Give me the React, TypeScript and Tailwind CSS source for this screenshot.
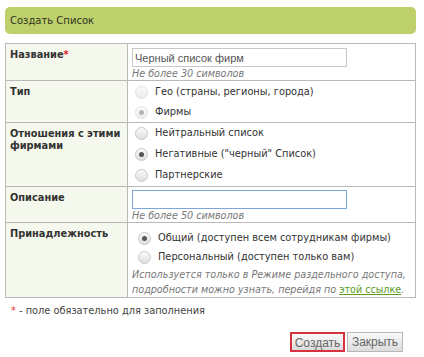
import React from "react";

const Radio = ({ checked, disabled }: { checked?: boolean; disabled?: boolean }) => (
  <span
    className={`inline-flex items-center justify-center w-[13px] h-[13px] rounded-full border shrink-0 ${
      disabled
        ? "border-[#e2e2e2] bg-gradient-to-b from-[#fbfbfb] to-[#ececec]"
        : "border-[#c9c9c9] bg-gradient-to-b from-[#fafafa] to-[#dedede]"
    }`}
  >
    {checked && (
      <span className={`w-[5px] h-[5px] rounded-full ${disabled ? "bg-[#b5b5b5]" : "bg-[#555]"}`}></span>
    )}
  </span>
);

const Option = ({
  label,
  checked,
  disabled,
  className = "",
}: {
  label: string;
  checked?: boolean;
  disabled?: boolean;
  className?: string;
}) => (
  <label className={`flex items-center gap-[7px] ${className}`}>
    <Radio checked={checked} disabled={disabled} />
    <span>{label}</span>
  </label>
);

const Label = ({ children }: { children: React.ReactNode }) => (
  <td className="w-[122px] align-top bg-[#f5f8ec] border border-[#b9b9b9] px-[4px] pt-[5px] font-bold text-[#333] leading-[12px]">
    {children}
  </td>
);

const Hint = ({ children, className = "" }: { children: React.ReactNode; className?: string }) => (
  <div className={`italic text-[#777] text-[9.6px] ${className}`}>{children}</div>
);

export default function App() {
  return (
    <div
      className="w-[424px] h-[357px] bg-white text-[9.8px] text-[#333] pt-[7px] px-[5px]"
      style={{ fontFamily: '"DejaVu Sans", Verdana, sans-serif' }}
    >
      <div className="h-[27px] w-[411px] rounded-[5px] bg-[#bdd06c] flex items-center pl-[5px] text-[10px] text-[#2f3320]">
        Создать Список
      </div>

      <table className="mt-[9px] w-[411px] border-collapse">
        <tbody>
          <tr>
            <Label>
              Название<span className="text-[#d22]">*</span>
            </Label>
            <td className="h-[37px] align-top border border-[#b9b9b9] pl-[4px] pt-[4px]">
              <input
                defaultValue="Черный список фирм"
                className="block w-[215px] h-[19px] border border-[#c8c8c8] px-[2px] text-[11px] text-[#555] outline-none"
                style={{ fontFamily: '"Liberation Sans", Arial, sans-serif' }}
              />
              <Hint className="leading-[13px]">Не более 30 символов</Hint>
            </td>
          </tr>
          <tr>
            <Label>Тип</Label>
            <td className="h-[42px] align-top border border-[#b9b9b9] pl-[7px] pt-[1px]">
              <Option label="Гео (страны, регионы, города)" disabled className="h-[20px]" />
              <Option label="Фирмы" checked disabled className="h-[20px]" />
            </td>
          </tr>
          <tr>
            <Label>Отношения с этими фирмами</Label>
            <td className="h-[64px] align-top border border-[#b9b9b9] pl-[7px]">
              <Option label="Нейтральный список" className="h-[21px]" />
              <Option label='Негативные ("черный" Список)' checked className="h-[21px]" />
              <Option label="Партнерские" className="h-[21px]" />
            </td>
          </tr>
          <tr>
            <Label>Описание</Label>
            <td className="h-[36px] align-top border border-[#b9b9b9] pl-[4px] pt-[3px]">
              <input
                className="block w-[215px] h-[19px] border border-[#7ea7d8] px-[2px] text-[11px] outline-none"
                style={{ fontFamily: '"Liberation Sans", Arial, sans-serif' }}
              />
              <Hint className="leading-[13px]">Не более 50 символов</Hint>
            </td>
          </tr>
          <tr>
            <Label>Принадлежность</Label>
            <td className="h-[75px] align-top border border-[#b9b9b9] pl-[4px] pt-[6px]">
              <Option label="Общий (доступен всем сотрудникам фирмы)" checked className="h-[19px] pl-[6px]" />
              <Option label="Персональный (доступен только вам)" className="h-[19px] pl-[6px]" />
              <Hint className="leading-[15px]">
                <span className="whitespace-nowrap">Используется только в Режиме раздельного доступа,</span>
                <br />
                подробности можно узнать, перейдя по{" "}
                <a className="text-[#5a9a1e] underline not-italic">этой ссылке</a>.
              </Hint>
            </td>
          </tr>
        </tbody>
      </table>

      <div className="mt-[6px] pl-[6px] text-[#444]">
        <span className="text-[#e33]">*</span> - поле обязательно для заполнения
      </div>

      <div
        className="mt-[13px] flex justify-end gap-[2px] pr-[16px] text-[12px] text-[#666]"
        style={{ fontFamily: '"Liberation Sans", Arial, sans-serif' }}
      >
        <button className="w-[55px] h-[20px] border-2 border-[#d6323e] bg-gradient-to-b from-[#fafafa] to-[#dcdcdc]">
          Создать
        </button>
        <button className="w-[56px] h-[20px] border border-[#b8b8b8] bg-gradient-to-b from-[#fafafa] to-[#dcdcdc]">
          Закрыть
        </button>
      </div>
    </div>
  );
}
